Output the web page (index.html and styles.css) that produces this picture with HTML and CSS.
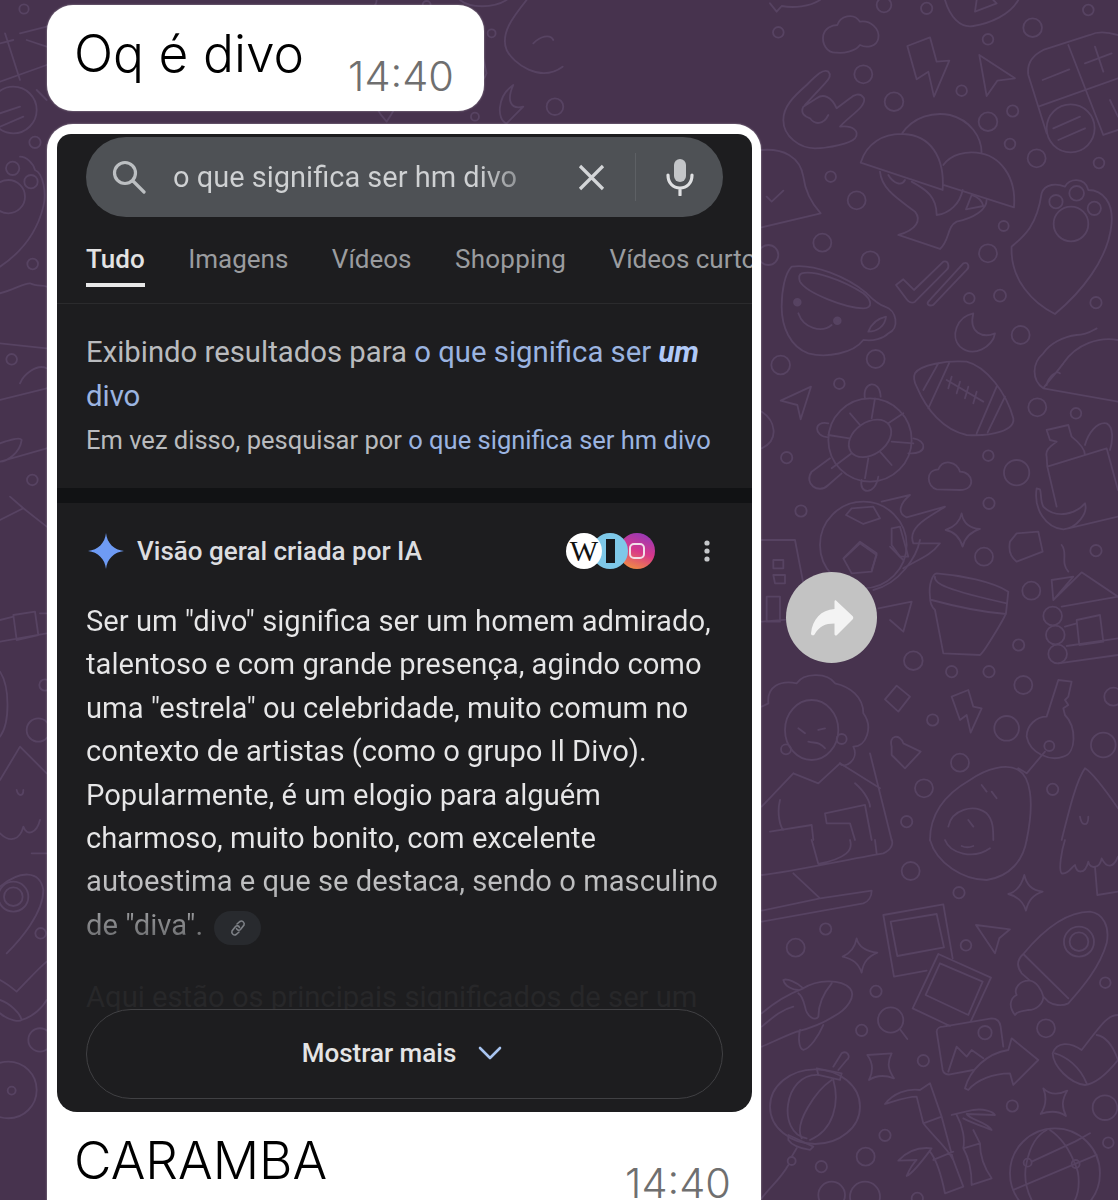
FILE: index.html
```html
<!DOCTYPE html>
<html>
<head>
    <title>Conversa</title>
    <link rel="stylesheet" href="styles.css">
</head>
<body>
    <!-- chat wallpaper, coordinates are 3x and scaled down per region -->
    <svg class="wallpaper" width="1118" height="1200" viewBox="0 0 1118 1200" fill="none" stroke="#574362" stroke-width="5.500" stroke-linecap="round" stroke-linejoin="round">
        <g transform="translate(760,0) scale(.3333)">
            <path d="M230 158C200 160 185 130 190 105C195 85 215 75 232 75C240 50 280 35 300 65C330 60 360 85 355 115C350 140 320 145 300 135C285 155 250 160 230 158Z"/>
            <path d="M442 138L510 112L530 185L568 182L522 290L505 215L470 238Z"/>
            <path d="M658 165L765 235L712 242L680 288Z"/>
            <path d="M1074 105C1040 95 1010 95 990 105L850 150C820 165 800 190 805 225L860 400M925 135L1030 405L1074 390M835 320L1074 235M848 240L928 208M975 190L1055 160M1005 140L1030 215M880 385L960 350M895 420L975 385M1050 300L1074 350"/>
            <circle cx="932" cy="385" r="72"/>
            <path d="M205 215C190 205 170 225 140 255C100 290 70 320 70 360C70 410 120 445 165 445C210 445 270 430 285 415C300 395 280 375 240 380C265 350 320 320 312 295C300 275 280 285 270 295L230 325C215 290 190 280 170 295L130 320C120 340 135 350 150 355C165 375 190 375 205 345M205 215C215 225 205 240 195 250L135 315"/>
            <path d="M302 488C320 430 370 400 430 402C510 405 555 470 548 570ZM425 402C460 350 520 335 570 345C630 360 665 410 665 460M550 495C575 460 620 455 650 458C720 465 770 530 762 622L550 555"/>
            <path d="M360 515C365 570 420 600 465 635C485 660 470 690 415 705L540 747C570 720 560 680 590 665C640 655 680 630 680 600M530 645C570 640 600 610 608 570M455 545C500 570 530 590 530 645M385 525C400 550 425 560 435 540M618 628L670 618C665 600 650 590 635 585Z"/>
            <path d="M755 740C790 710 830 680 845 580C855 550 890 550 915 560C925 535 975 530 985 570C1030 570 1060 610 1055 670C1045 780 960 880 885 942C820 910 750 840 755 740Z"/>
            <circle cx="888" cy="605" r="20"/><circle cx="950" cy="580" r="22"/><circle cx="1003" cy="625" r="20"/><circle cx="933" cy="672" r="52"/>
            <path d="M5 450C70 445 120 470 130 530C135 570 150 605 182 640L5 682M20 590L35 605L70 572"/>
            <path d="M95 800C160 790 260 830 320 880C340 900 360 915 375 920C410 930 420 985 385 1000C370 1015 340 1025 310 1020C280 1060 200 1075 145 1060C90 1040 65 980 65 920C65 870 75 820 95 800Z"/>
            <path d="M125 820C160 810 250 840 310 880C335 900 340 925 310 925C260 925 140 880 120 845C115 830 120 822 125 820ZM115 940C130 985 185 1000 215 975M325 995C335 970 355 955 378 950C375 980 350 995 325 995Z"/>
            <circle cx="112" cy="907" r="10" fill="#574362"/><circle cx="232" cy="962" r="10" fill="#574362"/>
            <path d="M408 855L430 838L462 870L550 785C565 780 570 800 560 810L465 905C455 912 445 905 440 898ZM505 905L610 790C625 785 630 800 620 810L520 915C505 920 500 912 505 905Z"/>
            <path d="M640 940C590 950 570 1010 600 1040C640 1075 700 1040 705 1000C670 1015 625 1000 640 940Z"/>
            <path d="M555 0C570 50 600 85 640 78C690 70 750 45 775 0M645 35L650 0M645 35L710 10L700 0M30 10L50 35L65 18C100 25 150 20 180 0"/>
            <circle cx="55" cy="97" r="16"/><circle cx="372" cy="15" r="22"/><circle cx="500" cy="25" r="17"/><circle cx="818" cy="83" r="28"/><circle cx="985" cy="30" r="16"/><circle cx="684" cy="118" r="16"/><circle cx="310" cy="223" r="27"/><circle cx="402" cy="305" r="28"/><circle cx="605" cy="272" r="16"/><circle cx="758" cy="333" r="17"/><circle cx="684" cy="365" r="28"/><circle cx="750" cy="432" r="16"/><circle cx="830" cy="475" r="27"/><circle cx="1017" cy="489" r="16"/><circle cx="212" cy="530" r="16"/><circle cx="290" cy="601" r="27"/><circle cx="187" cy="728" r="27"/><circle cx="331" cy="781" r="27"/><circle cx="731" cy="678" r="15"/><circle cx="684" cy="760" r="27"/><circle cx="1008" cy="908" r="17"/><circle cx="628" cy="895" r="16"/><circle cx="720" cy="887" r="18"/><circle cx="782" cy="1005" r="27"/><circle cx="25" cy="765" r="30"/>
        </g>
        <g transform="translate(760,330) scale(.3333)">
            <path d="M465 130C480 105 560 90 620 95C680 110 740 190 760 265C765 300 700 320 620 315C550 300 500 240 470 170C460 150 460 140 465 130ZM490 180L535 100M505 235L568 98M650 310L710 170M683 307L735 200M560 150L670 215M575 140L565 175M600 155L590 190M625 170L615 205M650 185L640 220"/>
            <circle cx="330" cy="330" r="125"/>
            <ellipse cx="330" cy="325" rx="70" ry="48" transform="rotate(-35 330 325)"/>
            <path d="M270 250L300 285M345 205L335 265M205 315L268 325M430 250L385 280M275 370L215 415M325 385L315 445M360 365L395 405M395 335L460 340M315 205C305 155 360 145 362 200M205 280C160 270 160 320 205 322M460 325C500 330 505 375 445 370M210 385L155 425C130 460 175 495 205 465L245 430M305 450C295 490 345 500 355 440"/>
            <path d="M62 212L153 170L122 268L112 225Z"/>
            <path d="M530 478C500 470 495 420 535 418C550 385 590 395 600 425C640 425 650 480 600 480Z"/>
            <path d="M1074 30C1020 20 950 40 910 100C880 140 860 160 850 175L1074 215M850 175C815 150 815 100 850 70C870 40 910 20 950 15C980 15 1000 0 1010 -5M860 165C865 140 890 120 900 130"/>
            <path d="M862 410L1040 355L1074 480M860 380C855 360 870 350 890 335L870 330L860 300L925 285L935 320C960 340 975 360 975 375M862 410L890 530M975 345C985 310 1010 275 1040 280C1060 290 1060 330 1050 360M830 475C820 540 860 595 910 598C950 595 985 550 975 520C950 550 890 570 850 530C840 510 845 490 840 478ZM925 595L1074 560M860 380L862 410"/>
            <circle cx="310" cy="645" r="130"/>
            <path d="M258 555L310 582L360 565L340 530L275 535ZM300 640L350 675L335 720M252 685L300 640M395 595L420 590L445 680L420 680L395 645ZM365 515L450 495C420 520 410 550 440 562L555 530C510 560 440 590 460 640L540 640C510 680 470 690 430 715"/>
            <path d="M750 635L770 610L835 605L848 665L770 695C750 680 745 660 750 635Z"/>
            <path d="M605 550C610 580 630 595 660 597C635 605 615 620 608 650C600 625 585 605 557 600C585 590 600 575 605 550Z"/>
            <path d="M5 245C45 270 60 330 5 355"/>
            <circle cx="62" cy="105" r="28"/><circle cx="347" cy="87" r="27"/><circle cx="238" cy="161" r="16"/><circle cx="80" cy="383" r="17"/><circle cx="123" cy="543" r="17"/><circle cx="685" cy="377" r="16"/><circle cx="770" cy="428" r="38"/><circle cx="832" cy="232" r="27"/><circle cx="948" cy="250" r="16"/><circle cx="687" cy="520" r="17"/>
        </g>
        <g transform="translate(760,540) scale(.3333)">
            <path d="M510 170C505 130 520 100 530 100C600 105 700 125 745 155L738 220C730 240 670 340 660 345L550 340L525 210C515 200 510 185 510 170ZM525 110C520 130 560 150 740 190M515 180C570 195 650 215 738 222"/>
            <path d="M250 55L300 5L350 40L335 95L275 100ZM390 20L430 60M480 0C470 50 420 130 340 150"/>
            <path d="M5 0L105 0L130 130M40 60L70 60L70 85L40 85ZM40 105L75 105L75 130L45 130ZM20 170L60 170L60 245L20 245ZM5 245L125 235"/>
            <path d="M355 205L455 185L430 275L390 240"/>
            <circle cx="878" cy="228" r="28"/><circle cx="886" cy="285" r="28"/><circle cx="893" cy="342" r="28"/>
            <path d="M875 120L940 110L880 180ZM880 180L965 97L1074 170M905 200L1074 170M915 260L950 250M920 318L1074 295M950 240L1020 225L1030 305L958 315ZM895 370L1074 345M905 15C925 40 900 65 925 95"/>
            <path d="M395 620C385 585 420 580 430 610L482 635L435 685L395 645ZM375 478L410 437L450 470L415 515ZM575 470L625 450L640 500L665 505L632 578L620 525L600 540Z"/>
            <path d="M800 590C800 555 830 530 860 530L895 420L935 425L925 470L915 480L925 495L910 505L915 525C950 560 950 640 910 650C870 665 810 640 800 590Z"/>
            <circle cx="868" cy="618" r="15"/>
            <path d="M510 900C510 820 560 760 630 720C680 685 740 670 775 690C810 710 825 780 800 900M775 685L800 700L855 635M565 860C575 810 640 790 680 820C700 840 700 870 700 900M665 735L680 755M695 755L710 775M625 840L640 860"/>
            <path d="M25 490C20 440 60 420 110 430C130 400 200 395 225 430C270 440 310 470 310 520C340 560 320 620 280 620C300 660 250 690 240 670M25 490L5 500"/>
            <ellipse cx="155" cy="570" rx="80" ry="90"/>
            <circle cx="245" cy="597" r="15"/><circle cx="78" cy="628" r="15"/>
            <path d="M100 700L175 730L240 670M100 700L5 800M240 670L360 745M330 640L395 900M30 875L155 855L160 900M195 820L315 795L335 900M195 820L200 850L270 850L285 900M115 565L135 580M175 570L195 565M145 605C165 610 180 605 195 625M60 780C50 820 60 860 70 870M285 730C320 760 330 790 330 800"/>
            <path d="M905 900C930 800 950 720 975 685C1000 700 1050 770 1074 805M960 830C965 860 985 860 985 830"/>
            <circle cx="672" cy="50" r="27"/><circle cx="1008" cy="32" r="17"/><circle cx="814" cy="152" r="27"/><circle cx="776" cy="315" r="17"/><circle cx="460" cy="362" r="28"/><circle cx="575" cy="395" r="17"/><circle cx="687" cy="395" r="17"/><circle cx="790" cy="435" r="27"/><circle cx="1060" cy="470" r="27"/><circle cx="518" cy="540" r="17"/><circle cx="740" cy="565" r="37"/><circle cx="1030" cy="615" r="37"/><circle cx="600" cy="668" r="27"/><circle cx="492" cy="745" r="27"/><circle cx="878" cy="748" r="17"/><circle cx="440" cy="845" r="17"/>
        </g>
        <g transform="translate(760,840) scale(.3333)">
            <path d="M155 0L175 72M5 105C100 95 250 60 370 40C395 30 400 10 395 0M345 0L350 40M270 0C280 30 260 55 175 72M100 100L180 175M5 212L180 175L335 152C335 170 325 185 310 190L5 245"/>
            <path d="M510 0C530 70 610 120 680 120C750 110 790 60 800 0M555 0C570 40 640 60 690 25M605 18C620 25 630 22 640 18"/>
            <path d="M915 0C905 30 895 90 905 100C925 105 935 80 945 75C950 100 975 105 985 65C990 90 1020 85 1025 55C1040 85 1060 85 1074 50M1005 80L1012 165L1074 155"/>
            <path d="M793 105C800 135 815 150 848 155C820 165 805 180 798 212C790 185 775 170 745 162C770 155 785 135 793 105ZM290 295C295 320 320 335 352 338C325 350 310 365 305 398C295 370 280 358 248 350C270 340 285 322 290 295Z"/>
            <path d="M370 225L550 193L578 355M370 225L402 410L500 392M392 245L530 222L552 322L412 348ZM535 342L693 413L632 545M535 342L458 505L570 558M540 370L668 425L625 525L497 465ZM530 575C530 565 540 560 550 560L695 535C710 535 720 545 722 560L730 620M530 575L548 690C550 700 560 705 570 703L640 690M565 695L590 620L620 650L635 630L670 655"/>
            <circle cx="675" cy="578" r="20"/>
            <path d="M615 745C630 690 680 640 745 630L755 595L835 660L760 735L750 700C700 700 650 720 625 750ZM648 255L750 268L718 295L705 340Z"/>
            <path d="M790 342C850 270 920 215 990 215C1030 220 1050 260 1040 310C1020 380 970 440 925 490C905 500 880 495 865 485L850 470M790 342C770 360 770 380 785 400L810 422M790 342L925 475M810 422C780 420 760 445 770 465C750 475 745 500 765 525C775 510 790 515 805 510C830 510 850 490 850 470C845 450 830 425 810 422Z"/>
            <circle cx="957" cy="305" r="45"/><circle cx="957" cy="305" r="28"/>
            <path d="M5 520C40 490 90 460 130 445C170 420 240 415 270 445C290 470 260 510 220 530C180 555 130 570 110 575C70 590 30 610 5 620M130 445C110 425 80 415 70 420C75 440 100 450 115 450M215 430C190 460 175 490 175 530C165 545 140 530 135 500C130 480 125 465 115 460M190 555C175 590 150 625 130 630C115 625 115 590 120 570M5 560C30 540 60 510 100 500"/>
            <circle cx="392" cy="540" r="38"/>
            <path d="M420 568L442 597M322 645L395 640C380 670 385 690 402 715C375 705 350 705 327 720C340 695 340 670 322 645ZM850 745C870 765 895 765 922 752C905 780 905 800 918 828C895 812 870 812 842 822C860 795 860 770 850 745Z"/>
            <ellipse cx="165" cy="800" rx="135" ry="112"/>
            <path d="M170 685L245 700L240 720L175 705ZM220 680L245 640C260 630 275 650 260 660L235 690M175 705C70 700 50 880 140 895M215 720C170 750 100 850 125 895M220 720C240 790 220 870 150 900M85 885L160 920L150 930C120 925 95 915 85 900ZM110 925L95 950M85 975C60 1020 30 1040 5 1075"/>
            <circle cx="95" cy="963" r="12"/>
            <path d="M375 792C400 760 440 745 480 750L510 730L545 830L490 850L470 770C440 770 400 785 375 792ZM490 850C520 890 560 920 580 960L610 1040L555 1060C545 1010 530 960 510 935M545 830L580 960M415 962C440 935 470 920 515 925C500 945 460 1000 440 1008C450 985 460 970 470 960ZM520 960L580 935M575 825L640 810C670 805 700 815 705 825L620 822C630 840 680 845 695 870C670 860 640 850 610 835M590 825C610 860 615 900 610 925L660 910L640 870M610 925C630 960 635 1000 635 1035L695 1015C670 980 660 950 660 910"/>
            <path d="M1074 525C1040 525 1020 560 965 630C930 605 890 605 878 640C880 680 930 730 975 735C1010 730 1050 690 1074 660M885 640C920 650 960 680 980 730M1010 585C1040 590 1060 620 1074 660"/>
            <circle cx="885" cy="1000" r="135"/>
            <path d="M800 968C810 920 830 885 860 870M945 972C960 1000 960 1050 945 1080M800 968C790 1010 800 1050 815 1080M945 972C925 920 900 890 870 870M815 965L945 905L990 880M760 1050L1010 945"/>
            <circle cx="803" cy="968" r="12"/><circle cx="947" cy="972" r="12"/><circle cx="215" cy="1065" r="40"/><circle cx="315" cy="1070" r="45"/>
            <circle cx="452" cy="93" r="27"/><circle cx="597" cy="158" r="17"/><circle cx="197" cy="267" r="17"/><circle cx="107" cy="323" r="27"/><circle cx="618" cy="316" r="16"/><circle cx="348" cy="454" r="17"/><circle cx="1036" cy="428" r="16"/><circle cx="305" cy="571" r="17"/><circle cx="858" cy="565" r="27"/><circle cx="490" cy="662" r="17"/><circle cx="757" cy="798" r="17"/><circle cx="1035" cy="803" r="37"/><circle cx="375" cy="886" r="17"/><circle cx="317" cy="950" r="27"/><circle cx="184" cy="980" r="17"/><circle cx="1045" cy="908" r="16"/><circle cx="472" cy="1075" r="17"/>
        </g>
        <g transform="scale(.3333)">
            <circle cx="72" cy="27" r="14"/><circle cx="105" cy="427" r="17"/><circle cx="38" cy="505" r="20"/><circle cx="93" cy="545" r="20"/><circle cx="25" cy="590" r="50"/><circle cx="98" cy="792" r="16"/><circle cx="35" cy="1078" r="16"/><circle cx="97" cy="1440" r="16"/><circle cx="40" cy="330" r="70"/>
            <path d="M15 100L60 240M0 245L140 195M80 120L140 140M0 130L40 120M60 100L140 80M110 270L140 300M0 340L60 320M0 380L70 350M60 470C80 470 100 490 105 510C130 520 140 580 130 620C110 700 60 760 0 800M0 880C40 870 70 850 90 850C110 860 130 855 140 860M0 1030L140 1045M60 1150C70 1125 110 1090 140 1105M0 1200L140 1165M0 1330C30 1320 60 1310 65 1320C60 1360 20 1385 0 1385M0 1385L140 1345M30 1490L70 1525L0 1560M70 1525L140 1580"/>
        </g>
        <g transform="translate(0,600) scale(.3333)">
            <path d="M40 45L105 35L115 105L50 120ZM0 125L140 100M0 60L40 50M120 40L140 40M0 215C30 260 30 370 0 410M60 440L0 540M60 440C90 470 120 500 140 520M50 570C55 590 70 590 70 570M0 860C60 810 120 810 130 870C130 940 60 1020 20 1060M140 1085C110 1110 85 1140 50 1175C20 1150 0 1140 0 1140M0 1240C30 1265 60 1265 65 1260M0 1200C30 1210 60 1240 65 1260M65 1260C100 1250 130 1220 140 1200M0 700C30 730 60 720 70 680C80 710 110 700 120 660M95 760L140 760"/>
            <circle cx="115" cy="390" r="35"/><circle cx="135" cy="255" r="17"/><circle cx="40" cy="890" r="45"/><circle cx="40" cy="890" r="28"/><circle cx="122" cy="1000" r="16"/><circle cx="120" cy="1320" r="35"/><circle cx="25" cy="1470" r="85"/><circle cx="35" cy="1472" r="12"/>
        </g>
        <g transform="translate(40,0) scale(.3333)">
            <path d="M1090 80C1085 50 1120 45 1125 75L1160 100L1115 165L1085 130ZM1205 130L1240 105C1225 80 1225 50 1250 40C1270 60 1280 80 1280 95L1310 85L1340 220C1330 250 1290 280 1240 305ZM1460 0C1420 50 1380 100 1400 150C1420 190 1500 250 1568 200M1480 130C1500 110 1530 100 1540 120M1040 365C990 310 970 240 1020 195C1070 180 1100 230 1085 280C1070 320 1050 350 1040 365ZM1420 255C1370 290 1370 360 1400 370L1450 320C1410 330 1400 300 1420 255ZM1010 0C1010 20 990 30 980 30M1260 0C1290 25 1360 25 1400 0M1005 105L1022 85L1040 105L1022 125ZM1135 230L1153 210L1172 230L1153 250Z"/>
            <circle cx="1035" cy="250" r="15"/><circle cx="1160" cy="15" r="12"/><circle cx="1355" cy="100" r="12"/><circle cx="1305" cy="350" r="12"/><circle cx="1545" cy="320" r="25"/>
        </g>
    </svg>

    <div class="chat">
        <div class="bubble bubble-short">
            <span class="msg">Oq é divo</span>
            <span class="time">14:40</span>
        </div>

        <div class="row">
            <div class="bubble bubble-photo">
                <div class="shot">
                    <div class="search-wrap">
                        <div class="search">
                            <svg class="ico-search" width="34" height="34" viewBox="0 0 34 34" fill="none" stroke="#bcbfc2" stroke-width="3.200" stroke-linecap="round"><circle cx="13" cy="13" r="10.500"/><path d="M21 21L32 32"/></svg>
                            <span class="query">o que significa ser hm divo</span>
                            <svg class="ico-x" width="27" height="27" viewBox="0 0 27 27" fill="none" stroke="#d4d6d8" stroke-width="3.200"><path d="M2 2L25 25M25 2L2 25"/></svg>
                            <span class="sep"></span>
                            <svg class="ico-mic" width="28" height="38" viewBox="0 0 28 38" fill="none"><rect x="8" y="1" width="12" height="23" rx="6" fill="#c3c5c8"/><path d="M2 17C2 25 7 30 14 30C21 30 26 25 26 17M14 30V37" stroke="#dfe0e2" stroke-width="3.200" stroke-linecap="round"/></svg>
                        </div>
                    </div>

                    <div class="tabs">
                        <span class="tab tab-on">Tudo</span>
                        <span class="tab">Imagens</span>
                        <span class="tab">Vídeos</span>
                        <span class="tab tab-wide">Shopping</span>
                        <span class="tab">Vídeos curtos</span>
                    </div>

                    <div class="spelling">
                        <p class="spell-main">Exibindo resultados para <a>o que significa ser <b>um</b><br>divo</a></p>
                        <p class="spell-alt">Em vez disso, pesquisar por <a>o que significa ser hm divo</a></p>
                    </div>

                    <div class="band"></div>

                    <div class="overview">
                        <div class="ai-head">
                            <svg class="ai-star" width="36" height="38" viewBox="0 0 36 36"><path d="M18 0C19 10 26 17 36 18C26 19 19 26 18 36C17 26 10 19 0 18C10 17 17 10 18 0Z" fill="#6e9bf4"/></svg>
                            <span class="ai-title">Visão geral criada por IA</span>
                            <div class="sources">
                                <span class="src src-w">W</span>
                                <span class="src src-b"><i></i></span>
                                <span class="src src-i"><i></i></span>
                            </div>
                            <svg class="ai-dots" width="6" height="22" viewBox="0 0 6 22" fill="#c6c8ca"><circle cx="3" cy="3" r="2.600"/><circle cx="3" cy="11" r="2.600"/><circle cx="3" cy="19" r="2.600"/></svg>
                        </div>

                        <p class="answer">Ser um "divo" significa ser um homem admirado,<br>talentoso e com grande presença, agindo como<br>uma "estrela" ou celebridade, muito comum no<br>contexto de artistas (como o grupo Il Divo).<br>Popularmente, é um elogio para alguém<br>charmoso, muito bonito, com excelente<br>autoestima e que se destaca, sendo o masculino<br>de "diva". <span class="chip"><svg width="18" height="18" viewBox="0 0 18 18" fill="none" stroke="#7d8086" stroke-width="1.600" stroke-linecap="round"><path d="M8 5L11 2.500C13 1 16 3.500 15 6L11.500 10.500C10 12 8 11 7.500 9.500M10 13L7 15.500C5 17 2 14.500 3 12L6.500 7.500C8 6 10 7 10.500 8.500"/></svg></span></p>

                        <p class="faded">Aqui estão os principais significados de ser um</p>

                        <div class="more">
                            <span>Mostrar mais</span>
                            <svg width="24" height="14" viewBox="0 0 24 14" fill="none" stroke="#a8c4f0" stroke-width="2.600" stroke-linecap="round" stroke-linejoin="round"><path d="M2 2L12 12L22 2"/></svg>
                        </div>
                    </div>
                </div>

                <div class="caption">
                    <span class="msg">CARAMBA</span>
                    <span class="time time-low">14:40</span>
                </div>
            </div>

            <div class="forward">
                <svg width="44" height="38" viewBox="0 0 44 38"><path d="M26 1.500C25.500 1 24.500 1.500 24.500 2.500V10C11 11 2.500 20 1 34.500C1 36.500 3.500 37 4.500 35.500C9 27.500 15 24.500 24.500 24.500V35C24.500 36.500 26 37 27 36L42.500 20.500C43.500 19.500 43.500 18 42.500 17Z" fill="#f3f3f3"/></svg>
            </div>
        </div>
    </div>
</body>
</html>
```

FILE: styles.css
```css
/* page and wallpaper */
html, body {
    margin: 0;
    height: 1200px;
    overflow: hidden;
}

body {
    position: relative;
    background-color: #47334e;
    font-family: "Inter", "Liberation Sans", sans-serif;
}

.wallpaper {
    position: absolute;
    top: 0;
    left: 0;
}

.chat {
    position: relative;
    padding: 5px 0 0 47px;
}

.row {
    display: flex;
    align-items: flex-start;
    margin-top: 13px;
}

/* message bubbles */
.bubble {
    background-color: #fff;
    border-radius: 26px;
    box-sizing: border-box;
    box-shadow: 0 0 2px rgba(255, 255, 255, 0.5);
}

.bubble-short {
    display: flex;
    justify-content: space-between;
    width: 437px;
    height: 106px;
    padding: 18px 30px 0 27px;
}

.bubble-photo {
    width: 714px;
    height: 1110px;
    padding: 10px 9px 0 10px;
}

.msg {
    font-size: 51.500px;
    line-height: 60px;
    font-weight: 350;
    color: #000;
}

.time {
    margin-top: 30px;
    font-size: 41.500px;
    line-height: 46px;
    font-weight: 300;
    color: #6f6f6f;
}

.caption {
    display: flex;
    justify-content: space-between;
    padding: 18px 21px 0 17px;
}

.time-low {
    margin-top: 36px;
    line-height: 34px;
}

/* screenshot inside the bubble */
.shot {
    height: 978px;
    overflow: hidden;
    background-color: #1d1d1f;
    border-radius: 14px 14px 20px 20px;
    font-family: "Roboto", "Liberation Sans", sans-serif;
}

.search-wrap {
    padding: 3px 29px 0;
}

.search {
    display: flex;
    align-items: center;
    height: 80px;
    padding: 0 26px;
    border-radius: 40px;
    background-color: #4e5155;
}

.ico-search {
    margin-right: 27px;
}

.query {
    width: 346px;
    font-size: 29px;
    white-space: nowrap;
    background: linear-gradient(90deg, #cfd1d3 88%, #8f9295 100%);
    -webkit-background-clip: text;
    background-clip: text;
    color: transparent;
}

.ico-x {
    margin-left: 59px;
}

.sep {
    width: 1px;
    height: 48px;
    margin-left: 30px;
    background-color: #5d6064;
}

.ico-mic {
    margin-left: 30px;
}

.tabs {
    display: flex;
    gap: 43.500px;
    height: 87px;
    box-sizing: border-box;
    padding: 24px 0 0 29px;
    border-bottom: 1px solid #2b2b2d;
    white-space: nowrap;
    overflow: hidden;
}

.tab {
    height: 46px;
    box-sizing: border-box;
    font-size: 26px;
    line-height: 36px;
    color: #9a9c9f;
    flex-shrink: 0;
}

.tab-wide {
    letter-spacing: 0.25px;
}

.tab-on {
    border-bottom: 4px solid #e8e8e8;
    color: #e3e3e3;
    font-weight: 500;
}

.spelling {
    height: 184px;
    box-sizing: border-box;
    padding: 27px 0 0 29px;
    color: #b9bbbe;
}

.spelling p {
    margin: 0;
}

.spelling a {
    color: #9bb4e0;
}

.spelling b {
    font-style: italic;
    color: #b0c9f7;
}

.spell-main {
    font-size: 29.300px;
    line-height: 43.500px;
}

.spell-alt {
    font-size: 25.500px;
    line-height: 44px;
}

.band {
    height: 15px;
    background-color: #111214;
}

/* AI overview */
.overview {
    position: relative;
    padding: 0 29px;
}

.ai-head {
    display: flex;
    align-items: center;
    height: 96px;
}

.ai-star {
    margin: 0 13px 0 2px;
}

.ai-title {
    font-size: 26px;
    font-weight: 500;
    color: #dcdde0;
}

.sources {
    display: flex;
    margin-left: auto;
}

.src {
    display: flex;
    align-items: center;
    justify-content: center;
    width: 36px;
    height: 36px;
    border-radius: 50%;
}

.src-w {
    position: relative;
    z-index: 3;
    background-color: #fff;
    color: #111;
    font-family: "Liberation Serif", serif;
    font-size: 30px;
}

.src-b {
    position: relative;
    z-index: 2;
    margin-left: -10px;
    background-color: #7ec8e8;
}

.src-b i {
    width: 9px;
    height: 24px;
    background-color: #17191c;
}

.src-i {
    margin-left: -9px;
    background: linear-gradient(200deg, #8a3ac0, #d8388a 50%, #f6a033);
}

.src-i i {
    width: 16px;
    height: 16px;
    box-sizing: border-box;
    border: 2px solid #f2dfe9;
    border-radius: 5px;
}

.ai-dots {
    margin: 0 13px 0 49px;
}

.answer {
    margin: 1px 0 0;
    font-size: 29.200px;
    line-height: 43.400px;
    white-space: nowrap;
    background: linear-gradient(#e6e6e7 72%, #a4a5a7 88%, #5f6063 100%);
    -webkit-background-clip: text;
    background-clip: text;
    color: transparent;
}

.chip {
    display: inline-flex;
    align-items: center;
    justify-content: center;
    width: 47px;
    height: 34px;
    margin-left: 4px;
    vertical-align: -2px;
    border-radius: 17px;
    background-color: #282a2e;
}

.faded {
    margin: 33px 0 0;
    font-size: 29.200px;
    line-height: 34px;
    white-space: nowrap;
    color: #272729;
}

.more {
    display: flex;
    align-items: center;
    justify-content: center;
    gap: 22px;
    height: 90px;
    margin-top: -5px;
    padding: 0 5px 2px 0;
    box-sizing: border-box;
    position: relative;
    border: 1.500px solid #414144;
    border-radius: 45px;
    background-color: #1d1d1f;
    font-size: 26px;
    font-weight: 500;
    color: #e4e4e5;
}

/* share button beside the photo */
.forward {
    display: flex;
    align-items: center;
    justify-content: center;
    width: 91px;
    height: 91px;
    margin: 448px 0 0 25px;
    border-radius: 50%;
    background-color: #c3c3c3;
}
```
